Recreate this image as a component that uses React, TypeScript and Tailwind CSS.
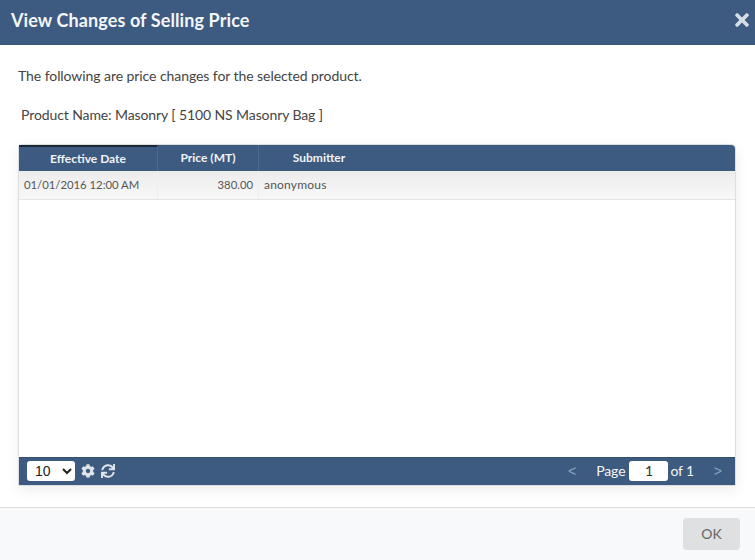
import { FaCog, FaSync, FaTimes } from "react-icons/fa";

const headerCell = "flex items-center justify-center h-full border-r border-[#4b6a90] text-xs font-bold text-[#f0f3f7]";

function Grid() {
  return (
    <div className="ml-[18px] mr-[19px] mt-[20px] h-[342px] flex flex-col border border-[#dcdee0] rounded-t-[4px] shadow-[0_4px_14px_rgba(0,0,0,0.07)]">
      <div className="flex h-[26px] bg-[#3d5a80] rounded-tr-[4px]">
        <div className={`${headerCell} w-[139px] border-t-2 border-t-[#1d2635]`}>Effective Date</div>
        <div className={`${headerCell} w-[101px]`}>Price (MT)</div>
        <div className="flex items-center justify-center h-full w-[120px] text-xs font-bold text-[#f0f3f7]">Submitter</div>
      </div>
      <div className="flex h-[29px] border-b border-[#e6e6e6] bg-gradient-to-b from-[#ececec] to-[#f8f8f8] text-[11.3px] text-[#555555]">
        <div className="flex items-center w-[139px] pl-[5px] border-r border-[#eeeeee]">01/01/2016 12:00 AM</div>
        <div className="flex items-center justify-end w-[101px] pr-[5px] border-r border-[#eeeeee]">380.00</div>
        <div className="flex items-center pl-[5px] text-xs tracking-[0.2px]">anonymous</div>
      </div>
      <div className="flex-1 bg-white" />
      <div className="flex items-center justify-between h-[28px] pb-px bg-[#3d5a80] border-t border-[#34506f] text-[#f4f6f9]">
        <div className="flex items-center pl-2">
          <select className="w-[48px] h-[20px] rounded-[3px] bg-white text-sm text-[#222222] pl-[4px] font-['Liberation_Sans',sans-serif]" defaultValue="10">
            <option>10</option>
            <option>20</option>
            <option>50</option>
          </select>
          <FaCog className="ml-[6px] w-[14px] h-[14px] text-[#dfe4ea]" />
          <FaSync className="ml-[6px] w-[14px] h-[14px] text-[#dfe4ea]" />
        </div>
        <div className="flex items-center text-sm pr-[13px]">
          <span className="text-[#8fa2ba] font-['Liberation_Sans',sans-serif]">&lt;</span>
          <span className="ml-[20px] tracking-[-0.1px]">Page</span>
          <input
            className="ml-[4px] w-[39px] h-[20px] rounded-[3px] bg-white text-center text-sm text-[#333333]"
            defaultValue="1"
          />
          <span className="ml-[2px] tracking-[-0.2px]">of 1</span>
          <span className="ml-[20px] text-[#8fa2ba] font-['Liberation_Sans',sans-serif]">&gt;</span>
        </div>
      </div>
    </div>
  );
}

export default function App() {
  return (
    <div className="w-[755px] h-[560px] flex flex-col bg-white font-['Lato',sans-serif] overflow-hidden">
      <div className="flex items-center justify-between h-[45px] shrink-0 bg-[#3d5a80] pl-[11px] pr-[3px] pb-[5px]">
        <h1 className="text-lg font-bold text-[#f4f6f9] tracking-[0.1px]">View Changes of Selling Price</h1>
        <FaTimes className="w-[20px] h-[20px] text-[#d8dee6]" />
      </div>
      <div className="flex-1">
        <p className="mt-[22px] ml-[18px] h-[18px] leading-[18px] text-sm tracking-[-0.07px] text-[#444444]">
          The following are price changes for the selected product.
        </p>
        <p className="mt-[21px] ml-[21px] h-[18px] leading-[18px] text-sm tracking-[-0.1px] text-[#444444]">
          Product Name: Masonry [ 5100 NS Masonry Bag ]
        </p>
        <Grid />
      </div>
      <div className="flex items-center justify-end h-[53px] shrink-0 bg-[#f8f9fb] border-t border-[#dddddd] pr-[15px]">
        <button className="w-[57px] h-[32px] rounded-[4px] bg-[#dfe0e2] text-sm text-[#666666]">OK</button>
      </div>
    </div>
  );
}
